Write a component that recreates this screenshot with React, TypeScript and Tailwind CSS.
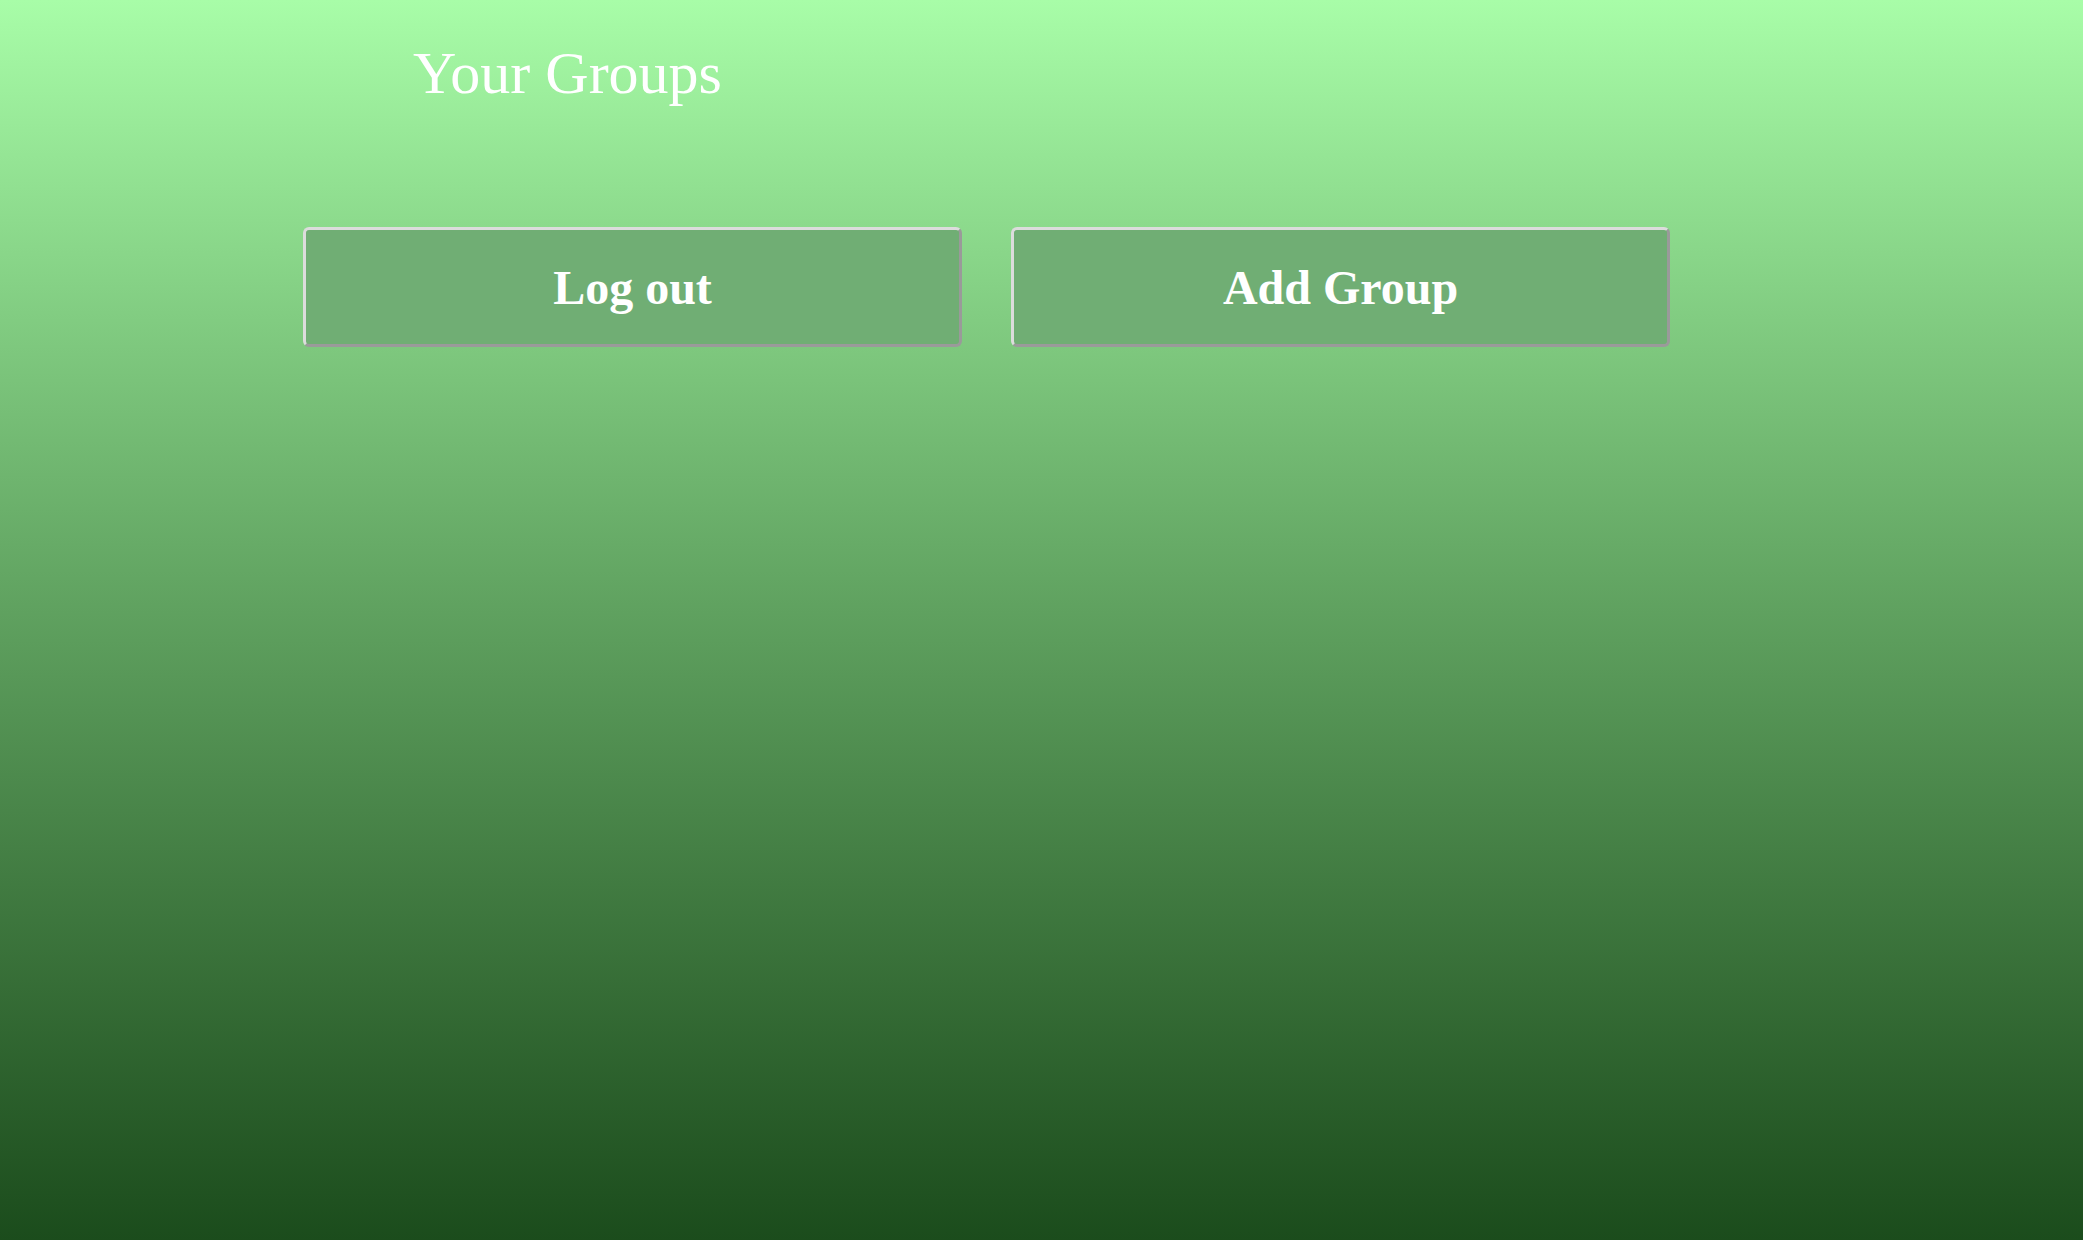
export default function App() {
  // two identical action buttons sit in one row under the heading
  const btn =
    "h-[120px] w-[659px] rounded-[6px] border-[3px] border-t-[#dcdcdc] border-l-[#dcdcdc] border-r-[#9a9a9a] border-b-[#9a9a9a] bg-[#70ae74] pt-[2px] text-[48px] font-bold text-white";

  return (
    <div className="min-h-[1240px] w-full bg-gradient-to-b from-[#a8fda8] to-[#1b4c1c] font-['Liberation_Serif',serif]">
      <h1 className="pl-[413px] pt-[38px] text-[60px] leading-[70px] font-normal text-white">
        Your Groups
      </h1>

      <div className="mt-[119px] flex gap-[49px] pl-[303px]">
        <button className={btn}>Log out</button>
        <button className={btn}>Add Group</button>
      </div>
    </div>
  );
}
